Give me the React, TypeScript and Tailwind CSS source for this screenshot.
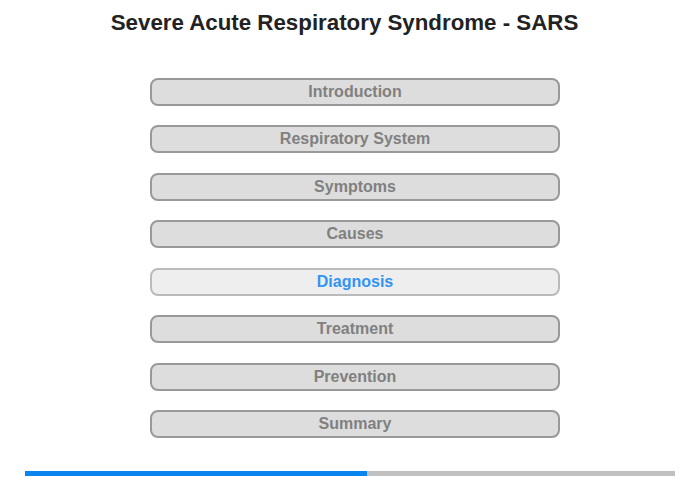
const topics = [
  'Introduction',
  'Respiratory System',
  'Symptoms',
  'Causes',
  'Diagnosis',
  'Treatment',
  'Prevention',
  'Summary',
];

const App = () => {
  const active = 'Diagnosis';

  return (
    <div className="w-[700px] h-[480px] bg-white font-['Liberation_Sans',Arial,sans-serif] flex flex-col">
      {/* Title */}
      <h1 className="mt-[10px] ml-[-11px] text-center text-[22.3px] leading-[26px] font-bold text-[#222222]">
        Severe Acute Respiratory Syndrome - SARS
      </h1>

      {/* Topic menu */}
      <div className="mt-[41.6px] ml-[150px] w-[410px] flex flex-col gap-[19.5px]">
        {topics.map((t) => (
          <button
            key={t}
            className={`h-[28px] w-full rounded-[8px] border-2 text-[16px] leading-[20px] font-bold ${
              t === active
                ? 'bg-[#eeeeee] border-[#bbbbbb] text-[#3393f3]'
                : 'bg-[#dddddd] border-[#999999] text-[#808080]'
            }`}
          >
            {t}
          </button>
        ))}
      </div>

      {/* Progress */}
      <div className="mt-auto mb-[4px] mx-[25px] h-[5px] flex bg-[#c0c0c0]">
        <div className="w-[342px] h-full bg-[#0a84f0]" />
      </div>
    </div>
  );
};

export default App;
